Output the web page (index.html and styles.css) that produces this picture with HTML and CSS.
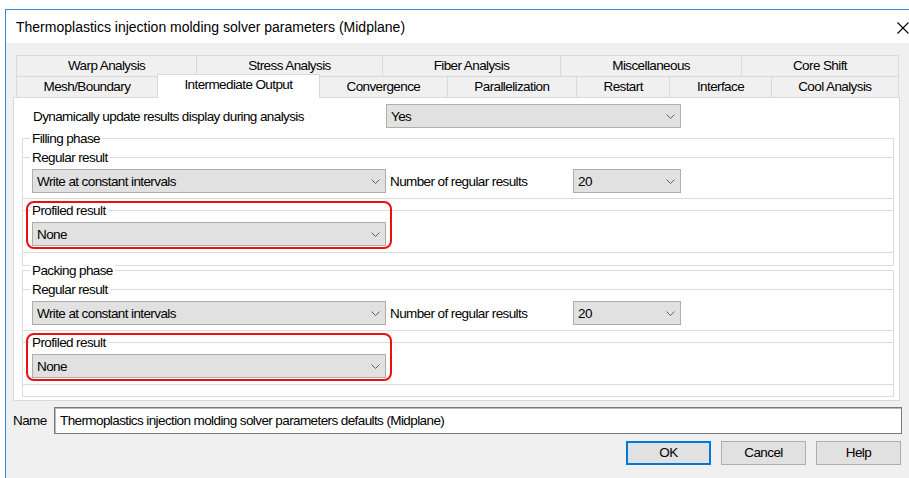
FILE: index.html
```html
<!DOCTYPE html>
<html lang="en">
<head>
<meta charset="utf-8">
<title>Thermoplastics injection molding solver parameters (Midplane)</title>
<link rel="stylesheet" href="styles.css">
</head>
<body>
<div class="window">
  <div class="titlebar">
    <span class="title">Thermoplastics injection molding solver parameters (Midplane)</span>
    <svg class="close" width="12" height="12" viewBox="0 0 12 12" aria-hidden="true">
      <path d="M0.5 0.5 L11.5 11.5 M11.5 0.5 L0.5 11.5" stroke="#000" stroke-width="1.1" fill="none"/>
    </svg>
  </div>

  <div class="client">
    <div class="tabctl">
      <div class="tabrow">
        <div class="tab">Warp Analysis</div>
        <div class="tab">Stress Analysis</div>
        <div class="tab">Fiber Analysis</div>
        <div class="tab">Miscellaneous</div>
        <div class="tab">Core Shift</div>
      </div>
      <div class="tabrow">
        <div class="tab">Mesh/Boundary</div>
        <div class="tab tab-active">Intermediate Output</div>
        <div class="tab">Convergence</div>
        <div class="tab">Parallelization</div>
        <div class="tab">Restart</div>
        <div class="tab">Interface</div>
        <div class="tab">Cool Analysis</div>
      </div>

      <div class="panel">
        <div class="row-top">
          <span class="row-label">Dynamically update results display during analysis</span>
          <div class="combo combo-yes"><span>Yes</span><svg class="chev" width="9" height="5" viewBox="0 0 9 5"><path d="M0.5 0.5 L4.5 4.5 L8.5 0.5" stroke="#5f5f5f" fill="none"/></svg></div>
        </div>

        <div class="group">
          <div class="gtitle">Filling phase</div>
          <div class="sub">
            <div class="gtitle">Regular result</div>
            <div class="line">
              <div class="combo combo-wide"><span>Write at constant intervals</span><svg class="chev" width="9" height="5" viewBox="0 0 9 5"><path d="M0.5 0.5 L4.5 4.5 L8.5 0.5" stroke="#5f5f5f" fill="none"/></svg></div>
              <span class="num-label">Number of regular results</span>
              <div class="combo combo-num"><span>20</span><svg class="chev" width="9" height="5" viewBox="0 0 9 5"><path d="M0.5 0.5 L4.5 4.5 L8.5 0.5" stroke="#5f5f5f" fill="none"/></svg></div>
            </div>
          </div>
          <div class="sub sub-profiled">
            <div class="gtitle">Profiled result</div>
            <div class="line">
              <div class="combo combo-wide"><span>None</span><svg class="chev" width="9" height="5" viewBox="0 0 9 5"><path d="M0.5 0.5 L4.5 4.5 L8.5 0.5" stroke="#5f5f5f" fill="none"/></svg></div>
            </div>
            <div class="mark"></div>
          </div>
        </div>

        <div class="group group-packing">
          <div class="gtitle">Packing phase</div>
          <div class="sub">
            <div class="gtitle">Regular result</div>
            <div class="line">
              <div class="combo combo-wide"><span>Write at constant intervals</span><svg class="chev" width="9" height="5" viewBox="0 0 9 5"><path d="M0.5 0.5 L4.5 4.5 L8.5 0.5" stroke="#5f5f5f" fill="none"/></svg></div>
              <span class="num-label">Number of regular results</span>
              <div class="combo combo-num"><span>20</span><svg class="chev" width="9" height="5" viewBox="0 0 9 5"><path d="M0.5 0.5 L4.5 4.5 L8.5 0.5" stroke="#5f5f5f" fill="none"/></svg></div>
            </div>
          </div>
          <div class="sub sub-profiled">
            <div class="gtitle">Profiled result</div>
            <div class="line">
              <div class="combo combo-wide"><span>None</span><svg class="chev" width="9" height="5" viewBox="0 0 9 5"><path d="M0.5 0.5 L4.5 4.5 L8.5 0.5" stroke="#5f5f5f" fill="none"/></svg></div>
            </div>
            <div class="mark"></div>
          </div>
        </div>
      </div>
    </div>

    <div class="footer">
      <div class="name-row">
        <span class="name-label">Name</span>
        <div class="textbox">Thermoplastics injection molding solver parameters defaults (Midplane)</div>
      </div>
      <div class="buttons">
        <div class="btn btn-default">OK</div>
        <div class="btn">Cancel</div>
        <div class="btn">Help</div>
      </div>
    </div>
  </div>
</div>
</body>
</html>
```

FILE: styles.css
```css
html, body {
  margin: 0;
  padding: 0;
  background: #ffffff;
  overflow: hidden;
  width: 909px;
  height: 478px;
}

body {
  font-family: "Liberation Sans", Arial, sans-serif;
  font-size: 13.5px;
  letter-spacing: -0.6px;
  color: #000;
}

/* dialog frame */
.window {
  margin: 9px 0 0 5px;
  width: 920px;
  height: 480px;
  border-top: 1px solid #2f8ad8;
  border-left: 1px solid #2f8ad8;
  background: #f0f0f0;
  display: flex;
  flex-direction: column;
}

.titlebar {
  height: 33px;
  background: #ffffff;
  display: flex;
  align-items: center;
  padding-left: 10px;
  flex: none;
}

.title {
  font-family: "Liberation Sans", Arial, sans-serif;
  font-size: 14px;
  letter-spacing: 0;
  color: #000;
  padding-top: 1px;
}

.close {
  margin-left: auto;
  margin-right: 17px;
  margin-top: 2px;
}

.client {
  padding: 12px 0 0 7px;
  background: #f0f0f0;
}

/* tab control */
.tabctl {
  width: 887px;
}

.tabrow {
  display: flex;
  height: 21px;
  margin: 0 1px 0 3px;
}

.tab {
  flex: 1 1 auto;
  padding: 0 6px;
  text-align: center;
  line-height: 20px;
  border: 1px solid #d9d9d9;
  border-bottom: none;
  margin-left: -1px;
  background: #f0f0f0;
  white-space: nowrap;
}

.tab:first-child {
  margin-left: 0;
}

.tab-active {
  position: relative;
  z-index: 1;
  background: #ffffff;
  margin-top: -2px;
  margin-bottom: -1px;
  line-height: 19px;
}

.panel {
  background: #ffffff;
  border: 1px solid #d9d9d9;
  height: 296px;
  padding: 6px 5px 0 8px;
  box-sizing: content-box;
  width: 872px;
}

.row-top {
  display: flex;
  align-items: center;
  padding-left: 11px;
  height: 24px;
}

.row-label {
  width: 353px;
  flex: none;
}

/* combo boxes */
.combo {
  box-sizing: border-box;
  height: 24px;
  background: #e1e1e1;
  border: 1px solid #adadad;
  display: flex;
  align-items: center;
  padding-left: 4px;
  flex: none;
  white-space: nowrap;
}

.combo .chev {
  margin-left: auto;
  margin-right: 5px;
}

.combo-yes { width: 295px; }
.combo-wide { width: 354px; }
.combo-num { width: 108px; }

/* group boxes */
.group {
  margin-top: 10px;
  border: 1px solid #dcdcdc;
  padding-bottom: 12px;
}

.group-packing {
  margin-top: 4px;
  padding-bottom: 11px;
}

.gtitle {
  width: fit-content;
  height: 15px;
  line-height: 15px;
  margin: -8px 0 0 7px;
  padding: 0 2px;
  background: #ffffff;
}

.sub {
  margin-top: 11px;
  border-top: 1px solid #dcdcdc;
  border-bottom: 1px solid #dcdcdc;
  padding-bottom: 5px;
}

.sub-profiled {
  position: relative;
  padding-bottom: 6px;
}

.line {
  display: flex;
  align-items: center;
  margin-top: 4px;
  padding-left: 9px;
}

.num-label {
  width: 183px;
  margin-left: 4px;
  flex: none;
}

/* red outline drawn over the profiled result group */
.mark {
  position: absolute;
  left: 3px;
  top: -10px;
  width: 366px;
  height: 48px;
  box-sizing: border-box;
  border: 2px solid #ea1010;
  border-radius: 8px;
}

/* name + buttons */
.footer {
  width: 889px;
}

.name-row {
  display: flex;
  align-items: center;
  margin-top: 6px;
}

.name-label {
  width: 41px;
  flex: none;
}

.textbox {
  flex: 1;
  height: 27px;
  box-sizing: border-box;
  background: #ffffff;
  border: 1px solid #7a7a7a;
  box-shadow: inset 1px 1px 0 #b9b9b9;
  padding-left: 5px;
  line-height: 25px;
  white-space: nowrap;
}

.buttons {
  display: flex;
  justify-content: flex-end;
  gap: 10px;
  margin-top: 7px;
  padding-right: 1px;
}

.btn {
  width: 85px;
  height: 24px;
  box-sizing: border-box;
  background: #e1e1e1;
  border: 1px solid #adadad;
  text-align: center;
  line-height: 22px;
}

.btn-default {
  border: 2px solid #0078d7;
  line-height: 20px;
}
```
